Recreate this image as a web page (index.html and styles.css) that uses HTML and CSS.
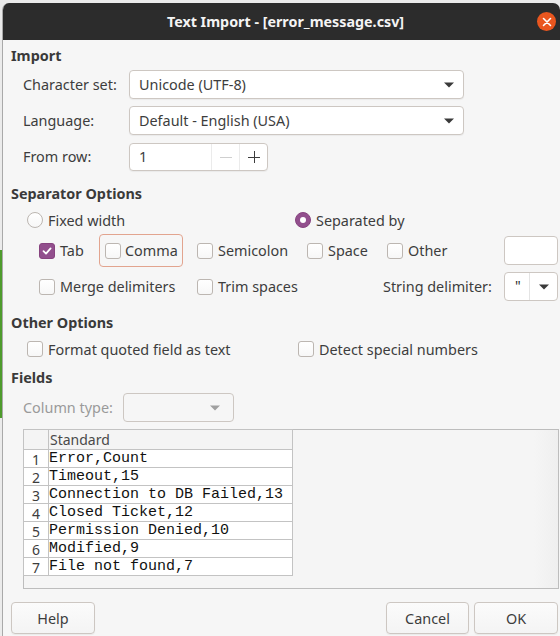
FILE: index.html
```html
<!DOCTYPE html>
<html>
<head>
<meta charset="utf-8">
<title>Text Import</title>
<link rel="stylesheet" href="styles.css">
</head>
<body>
<div class="desk-edge"><div class="green"></div></div>
<div class="window">
  <div class="titlebar">
    <span></span>
    <span class="title">Text Import - [error_message.csv]</span>
    <span class="close"><svg width="10" height="10" viewBox="0 0 10 10"><path d="M1.5 1.5L8.5 8.5M8.5 1.5L1.5 8.5" stroke="#fff" stroke-width="1.6" stroke-linecap="round"/></svg></span>
  </div>
  <div class="content">
    <div class="heading h-import">Import</div>
    <div class="import-grid">
      <div class="label">Character set:</div>
      <div class="combo combo-wide"><span>Unicode (UTF-8)</span><svg class="arrow" width="10" height="6" viewBox="0 0 10 6"><path d="M0 0.5H10L5 5.5Z"/></svg></div>
      <div class="label">Language:</div>
      <div class="combo combo-wide"><span>Default - English (USA)</span><svg class="arrow" width="10" height="6" viewBox="0 0 10 6"><path d="M0 0.5H10L5 5.5Z"/></svg></div>
      <div class="label">From row:</div>
      <div class="spin">
        <span class="spin-input">1</span>
        <span class="spin-btn dim"><svg width="12" height="12" viewBox="0 0 12 12"><path d="M0 6.5H12" stroke="currentColor" stroke-width="1"/></svg></span>
        <span class="spin-btn"><svg width="12" height="12" viewBox="0 0 12 12"><path d="M0 6.5H12M6.5 0V12" stroke="currentColor" stroke-width="1"/></svg></span>
      </div>
    </div>

    <div class="heading h-sep">Separator Options</div>
    <div class="radio-row">
      <div class="opt w-fixed"><span class="radio"></span><span>Fixed width</span></div>
      <div class="opt"><span class="radio on"></span><span>Separated by</span></div>
    </div>
    <div class="sep-row1">
      <div class="opt w-tab"><span class="check on"><svg width="12" height="12" viewBox="0 0 12 12"><path d="M2.5 6.2L5 8.6L9.6 3.4" fill="none" stroke="#fff" stroke-width="1.8" stroke-linecap="round" stroke-linejoin="round"/></svg></span><span>Tab</span></div>
      <div class="opt focus-box"><span class="check"></span><span>Comma</span></div>
      <div class="opt w-semi"><span class="check"></span><span>Semicolon</span></div>
      <div class="opt w-space"><span class="check"></span><span>Space</span></div>
      <div class="opt w-other"><span class="check"></span><span>Other</span></div>
      <div class="entry"></div>
    </div>
    <div class="sep-row2">
      <div class="opt w-merge"><span class="check"></span><span>Merge delimiters</span></div>
      <div class="opt w-trim"><span class="check"></span><span>Trim spaces</span></div>
      <div class="label w-strdel">String delimiter:</div>
      <div class="small-combo"><span class="quote">"</span><span class="small-btn"><svg width="10" height="6" viewBox="0 0 10 6"><path d="M0 0.5H10L5 5.5Z"/></svg></span></div>
    </div>

    <div class="heading h-other">Other Options</div>
    <div class="other-row">
      <div class="opt w-quoted"><span class="check"></span><span>Format quoted field as text</span></div>
      <div class="opt"><span class="check"></span><span>Detect special numbers</span></div>
    </div>

    <div class="heading h-fields">Fields</div>
    <div class="coltype-row">
      <div class="label disabled w-coltype">Column type:</div>
      <div class="combo combo-disabled"><svg class="arrow" width="10" height="6" viewBox="0 0 10 6"><path d="M0 0.5H10L5 5.5Z"/></svg></div>
    </div>

    <div class="preview">
      <table class="grid">
        <thead>
          <tr><th class="num"></th><th class="col">Standard</th></tr>
        </thead>
        <tbody>
          <tr><td class="num">1</td><td class="data">Error,Count</td></tr>
          <tr><td class="num">2</td><td class="data">Timeout,15</td></tr>
          <tr><td class="num">3</td><td class="data">Connection to DB Failed,13</td></tr>
          <tr><td class="num">4</td><td class="data">Closed Ticket,12</td></tr>
          <tr><td class="num">5</td><td class="data">Permission Denied,10</td></tr>
          <tr><td class="num">6</td><td class="data">Modified,9</td></tr>
          <tr><td class="num">7</td><td class="data">File not found,7</td></tr>
        </tbody>
      </table>
    </div>

    <div class="buttons">
      <div class="btn btn-help">Help</div>
      <div class="spacer"></div>
      <div class="btn btn-cancel">Cancel</div>
      <div class="btn btn-ok">OK</div>
    </div>
  </div>
</div>
</body>
</html>
```

FILE: styles.css
```css
* { box-sizing: border-box; }
html, body { margin: 0; padding: 0; }
body {
  width: 560px;
  height: 636px;
  overflow: hidden;
  display: flex;
  background: #ebebeb;
  font-family: "Noto Sans", "DejaVu Sans", sans-serif;
  font-size: 14.4px;
  color: #3d3d3d;
}
.desk-edge { width: 2px; flex: none; padding-top: 250px; }
.green { height: 168px; background: #4e9b2c; }

.window {
  flex: 1;
  margin-top: 3px;
  border-left: 1px solid #a9a9a9;
  border-radius: 7px 7px 0 0;
  background: #f6f6f6;
  overflow: hidden;
  display: flex;
  flex-direction: column;
}
.titlebar {
  height: 37px;
  flex: none;
  background: #2c2c2c;
  display: grid;
  grid-template-columns: 1fr auto 1fr;
  align-items: center;
}
.title {
  color: #f4f4f4;
  font-weight: bold;
  font-size: 14.3px;
  padding-left: 8px;
}
.close {
  justify-self: end;
  margin-right: 4px;
  width: 19px;
  height: 19px;
  border-radius: 50%;
  background: #e9561f;
  display: flex;
  align-items: center;
  justify-content: center;
}

.content { padding: 0 2px 0 8px; display: flex; flex-direction: column; }
.heading { height: 20px; line-height: 20px; font-weight: bold; color: #3a3a3a; }
.h-import { margin-top: 6px; }
.h-sep { margin-top: 13px; }
.h-other { margin-top: 12px; }
.h-fields { margin-top: 9px; }

.label { white-space: nowrap; }
.label.disabled { color: #9a9a9a; }

.import-grid {
  margin-top: 4px;
  margin-left: 12px;
  display: grid;
  grid-template-columns: 106px auto;
  grid-auto-rows: 29px;
  row-gap: 7px;
  align-items: center;
}
.combo {
  height: 29px;
  display: flex;
  align-items: center;
  justify-content: space-between;
  border: 1px solid #cdc7c2;
  border-radius: 4px;
  background: #fff;
  padding: 0 9px 0 9px;
  box-shadow: 0 1px 1px rgba(0,0,0,0.05);
}
.combo-wide { width: 335px; }
.arrow path, .small-btn path { fill: #3a3a3a; }
.combo-disabled {
  width: 111px;
  background: #f6f6f6;
  justify-content: flex-end;
  padding-right: 13px;
  box-shadow: none;
}
.combo-disabled .arrow path { fill: #a0a0a0; }

.spin {
  width: 139px;
  height: 28px;
  display: flex;
  border: 1px solid #cdc7c2;
  border-radius: 4px;
  background: #fff;
  box-shadow: 0 1px 1px rgba(0,0,0,0.05);
}
.spin-input { flex: 1; padding-left: 9px; line-height: 26px; }
.spin-btn {
  width: 28px;
  border-left: 1px solid #ebebeb;
  display: flex;
  align-items: center;
  justify-content: center;
  color: #3d3d3d;
}
.spin-btn.dim { color: #cfcfcf; }

.opt { display: flex; align-items: center; gap: 5px; white-space: nowrap; flex: none; }
.check, .radio {
  width: 16px;
  height: 16px;
  flex: none;
  border: 1px solid #bcb6b1;
  background: linear-gradient(#ffffff, #f7f7f7);
  display: flex;
  align-items: center;
  justify-content: center;
}
.check { border-radius: 3px; }
.radio { border-radius: 50%; }
.check.on { background: #924f8d; border-color: #87437f; }
.radio.on { background: #924f8d; border-color: #87437f; }
.radio.on::after {
  content: "";
  width: 6px;
  height: 6px;
  border-radius: 50%;
  background: #fff;
}

.radio-row { margin-top: 6px; height: 20px; display: flex; padding-left: 16px; }
.w-fixed { width: 268px; }

.sep-row1 { margin-top: 4px; height: 33px; display: flex; align-items: center; padding-left: 28px; }
.w-tab { width: 60px; }
.focus-box {
  width: 84px;
  height: 33px;
  margin-right: 14px;
  padding-left: 5px;
  gap: 4px;
  border: 1px solid #e2a48f;
  border-radius: 4px;
}
.w-semi { width: 110px; }
.w-space { width: 80px; }
.w-other { width: 117px; }
.entry {
  width: 54px;
  height: 29px;
  border: 1px solid #cdc7c2;
  border-radius: 4px;
  background: #fff;
}

.sep-row2 { margin-top: 5px; height: 29px; display: flex; align-items: center; padding-left: 28px; }
.w-merge { width: 158px; }
.w-trim { width: 186px; }
.w-strdel { width: 121px; }
.small-combo {
  width: 54px;
  height: 29px;
  display: flex;
  border: 1px solid #cdc7c2;
  border-radius: 4px;
  background: #fff;
}
.quote { width: 25px; padding-left: 10px; line-height: 25px; font-size: 14px; color: #2a2a2a; border-right: 1px solid #e4e4e4; }
.small-btn { flex: 1; display: flex; align-items: center; justify-content: center; }

.other-row { margin-top: 6px; height: 20px; display: flex; padding-left: 16px; }
.w-quoted { width: 271px; }

.coltype-row { margin-top: 5px; height: 29px; display: flex; align-items: center; padding-left: 12px; }
.w-coltype { width: 100px; }

.preview {
  margin-top: 7px;
  margin-left: 12px;
  width: 536px;
  height: 160px;
  border: 1px solid #bdbdbd;
  background: linear-gradient(to right, #f5f5f5 calc(100% - 24px), #efefef);
}
.grid {
  border-collapse: collapse;
  margin-left: -1px;
  margin-top: -1px;
}
.grid th, .grid td { padding: 0; border: 1px solid #c3c3c3; }
.grid th {
  height: 20px;
  font-weight: normal;
  text-align: left;
  background: #f4f4f4;
  color: #4a4a4a;
  font-size: 14px;
  line-height: 17px;
}
.grid th.num { width: 25px; }
.grid th.col { width: 244px; padding-left: 1px; }
.grid td { height: 18px; background: #fff; }
.grid td.num {
  text-align: center;
  font-size: 14px;
  color: #3d3d3d;
  line-height: 15px;
  padding-top: 2px;
}
.grid td.data {
  font-family: "Liberation Mono", "DejaVu Sans Mono", monospace;
  font-size: 15px;
  line-height: 15px;
  color: #111;
  padding-left: 0;
}

.buttons { margin-top: 13px; display: flex; gap: 5px; }
.spacer { flex: 1; }
.btn {
  height: 32px;
  display: flex;
  align-items: center;
  justify-content: center;
  border: 1px solid #cdc7c2;
  border-radius: 4px;
  background: linear-gradient(#fbfbfb, #f4f4f4);
  box-shadow: 0 1px 1px rgba(0,0,0,0.05);
  color: #3d3d3d;
}
.btn-help { width: 84px; }
.btn-cancel { width: 83px; }
.btn-ok { width: 84px; }
```
